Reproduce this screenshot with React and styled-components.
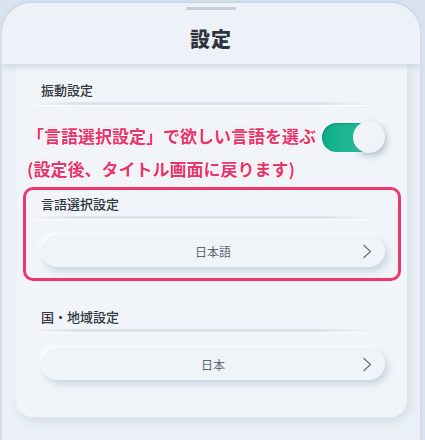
import React from 'react';
import styled, { createGlobalStyle } from 'styled-components';

const GlobalStyle = createGlobalStyle`
    html, body {
        margin: 0;
        padding: 0;
        background: #d9e3ee;
        font-family: "Noto Sans CJK JP", "Noto Sans", sans-serif;
        color: #333a44;
    }
`;

const Screen = styled.div`
    width: 425px;
    height: 440px;
    overflow: hidden;
    padding: 3px 5px 0 2px;
    box-sizing: border-box;
`;

const Sheet = styled.div`
    height: 100%;
    background: #eaf0f6;
    border-radius: 30px 30px 0 0;
    box-shadow: 0 -1px 3px rgba(150, 170, 195, 0.35);
    display: flex;
    flex-direction: column;
    overflow: hidden;
`;

const Header = styled.header`
    height: 61px;
    flex-shrink: 0;
    display: flex;
    flex-direction: column;
    align-items: center;
    background: #edf2f8;
    box-shadow: 0 3px 5px rgba(170, 185, 205, 0.45);
    position: relative;
    z-index: 1;
`;

const Handle = styled.div`
    width: 50px;
    height: 3px;
    margin-top: 4px;
    border-radius: 2px;
    background: #c6ccd5;
`;

const Title = styled.h1`
    margin: 15px 0 0;
    font-size: 20px;
    line-height: 28px;
    font-weight: 900;
    color: #2f353d;
    letter-spacing: 1px;
`;

const Card = styled.main`
    position: relative;
    margin: 0 13px 0 15px;
    padding: 17px 22px 37px 24px;
    background: #f1f5f9;
    border-radius: 0 0 16px 16px;
    box-shadow: 2px 4px 8px rgba(165, 180, 200, 0.35), -1px 0 3px rgba(255, 255, 255, 0.9);
    display: flex;
    flex-direction: column;
    gap: 41px;
`;

const Section = styled.section`
    display: flex;
    flex-direction: column;
`;

const Label = styled.div`
    font-size: 13px;
    line-height: 18px;
    font-weight: 500;
    color: #30363e;
`;

const Divider = styled.div`
    height: 3px;
    margin: 3px 15px 16px -6px;
    border-radius: 2px;
    background: linear-gradient(90deg, rgba(215, 222, 233, 0), rgba(215, 222, 233, 0.8) 12%, rgba(215, 222, 233, 0.8) 85%, rgba(215, 222, 233, 0));
    box-shadow: 0 1px 1px rgba(255, 255, 255, 0.9);
`;

const ToggleRow = styled.div`
    display: flex;
    justify-content: flex-end;
`;

const Toggle = styled.div`
    width: 63px;
    height: 33px;
    position: relative;
    display: flex;
    align-items: center;
`;

const Track = styled.div`
    width: 58px;
    height: 29px;
    border-radius: 15px;
    background: linear-gradient(90deg, #0fae88, #2bc39c);
    box-shadow: inset 1px 1px 2px rgba(0, 90, 70, 0.3);
`;

const Knob = styled.div`
    position: absolute;
    right: 0;
    top: 0;
    width: 32px;
    height: 32px;
    border-radius: 50%;
    background: #f0f4f8;
    box-shadow: 2px 3px 6px rgba(120, 140, 170, 0.5);
`;

const Pill = styled.button`
    position: relative;
    height: 32px;
    border: none;
    border-radius: 16px;
    background: #eff4f9;
    box-shadow: 3px 4px 7px rgba(160, 177, 200, 0.5), -2px -2px 4px rgba(255, 255, 255, 0.95);
    font-family: inherit;
    font-size: 12px;
    color: #60656d;
    display: flex;
    align-items: center;
    justify-content: center;
    padding: 0;
    cursor: pointer;
`;

const Chevron = styled.svg`
    position: absolute;
    right: 13px;
    top: 9px;
`;

const Highlight = styled.div`
    position: absolute;
    left: 6px;
    right: 6px;
    top: 123px;
    height: 94px;
    border: 3px solid #ee3869;
    border-radius: 10px;
    box-sizing: border-box;
    pointer-events: none;
`;

const Note = styled.div`
    position: absolute;
    left: 10px;
    top: 55px;
    font-size: 17px;
    line-height: 33px;
    font-weight: 700;
    color: #e8336b;
    white-space: nowrap;
    text-shadow:
        1px 0 0 #fff, -1px 0 0 #fff, 0 1px 0 #fff, 0 -1px 0 #fff,
        1px 1px 0 #fff, -1px -1px 0 #fff, 1px -1px 0 #fff, -1px 1px 0 #fff,
        0 0 3px rgba(232, 51, 107, 0.35);
`;

function SelectButton({ value }) {
    return (
        <Pill>
            {value}
            <Chevron width="10" height="15" viewBox="0 0 10 15">
                <polyline points="1.5,1 8.5,7.5 1.5,14" fill="none" stroke="#6f747b" strokeWidth="1.3" />
            </Chevron>
        </Pill>
    );
}

export default function App() {
    return (
        <Screen>
            <GlobalStyle />
            <Sheet>
                <Header>
                    <Handle />
                    <Title>設定</Title>
                </Header>
                <Card>
                    <Section>
                        <Label>振動設定</Label>
                        <Divider />
                        <ToggleRow>
                            <Toggle>
                                <Track />
                                <Knob />
                            </Toggle>
                        </ToggleRow>
                    </Section>
                    <Section>
                        <Label>言語選択設定</Label>
                        <Divider />
                        <SelectButton value="日本語" />
                    </Section>
                    <Section>
                        <Label>国・地域設定</Label>
                        <Divider />
                        <SelectButton value="日本" />
                    </Section>
                    <Highlight />
                    <Note>
                        <div>「言語選択設定」で欲しい言語を選ぶ</div>
                        <div>(設定後、タイトル画面に戻ります)</div>
                    </Note>
                </Card>
            </Sheet>
        </Screen>
    );
}
